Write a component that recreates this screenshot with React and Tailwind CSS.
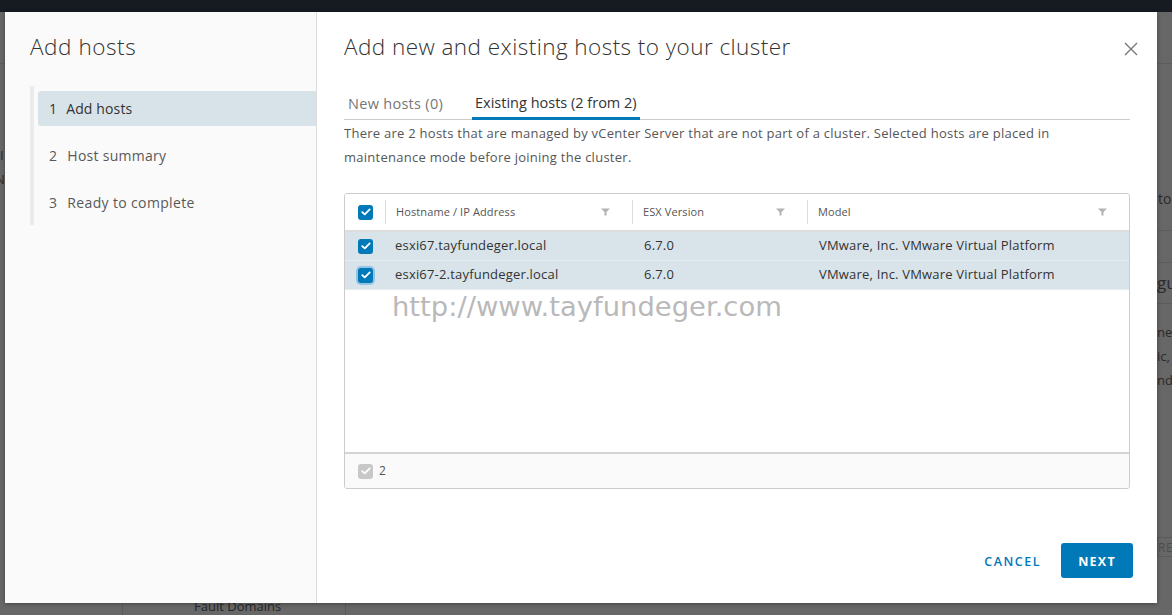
import React from "react";

const FONT = { fontFamily: '"Open Sans", "Liberation Sans", sans-serif' };

function Check({ variant = "blue", focus = false }) {
  const bg = variant === "blue" ? "bg-[#0079b8]" : "bg-[#c8c8c8]";
  return (
    <span
      className={`flex h-[15px] w-[15px] items-center justify-center rounded-[3px] ${bg} ${
        focus ? "shadow-[0_0_0_2px_rgba(90,170,230,0.55)]" : ""
      }`}
    >
      <svg width="10" height="8" viewBox="0 0 10 8" fill="none">
        <path d="M1.3 4.2 L3.8 6.4 L8.7 1.4" stroke="white" strokeWidth="1.8" strokeLinecap="round" strokeLinejoin="round" />
      </svg>
    </span>
  );
}

function Filter() {
  return (
    <svg width="9" height="8" viewBox="0 0 9 8">
      <path d="M0 0.5 H9 L5.5 4 V7.5 H3.5 V4 Z" fill="#b3b3b3" />
    </svg>
  );
}

function HeaderCell({ label, className }) {
  return (
    <div className={`flex items-center ${className}`}>
      <div className="my-[7px] flex h-[24px] flex-1 items-center justify-between border-l border-[#dcdcdc] pl-[10px] pr-[22px]">
        <span className="text-[11px] font-medium tracking-[0.01em] text-[#555]">{label}</span>
        <Filter />
      </div>
    </div>
  );
}

function Row({ host, focus }) {
  return (
    <div className="flex h-[29px] items-center border-b border-[#e6ecef] bg-[#d9e4ea] text-[13px] tracking-[0.015em] text-[#333]">
      <div className="flex w-[40px] items-center pl-[13px]">
        <Check focus={focus} />
      </div>
      <div className="w-[247px] pl-[10px]">{host}</div>
      <div className="w-[175px] pl-[12px]">6.7.0</div>
      <div className="flex-1 pl-[12px]">VMware, Inc. VMware Virtual Platform</div>
    </div>
  );
}

export default function App() {
  return (
    <div className="relative h-[615px] w-[1172px] overflow-hidden bg-[#676767]" style={FONT}>
      {/* background app chrome behind overlay */}
      <div className="absolute left-0 top-0 h-[12px] w-full bg-[#151b21]" />
      <div className="absolute left-0 top-[12px] h-[52px] w-full border-b border-[#5e5e5e]" />
      <span className="absolute left-[-5px] top-[170px] text-[13px] text-[#2a2a2a]">N</span>
      <span className="absolute left-[0px] top-[146px] text-[13px] text-[#2a2a2a]">I</span>
      <div className="absolute right-0 top-[230px] h-px w-[15px] bg-[#5c5c5c]" />
      <span className="absolute left-[1158px] top-[188px] text-[14px] text-[#2a2a2a]">to</span>
      <div className="absolute right-0 top-[262px] h-px w-[15px] bg-[#5c5c5c]" />
      <span className="absolute left-[1157px] top-[270px] text-[17px] text-[#2a2a2a]">gu</span>
      <div className="absolute right-0 top-[303px] h-px w-[15px] bg-[#5c5c5c]" />
      <span className="absolute left-[1157px] top-[323px] text-[13px] text-[#2a2a2a]">ne</span>
      <span className="absolute left-[1157px] top-[347px] text-[13px] text-[#2a2a2a]">ic,</span>
      <span className="absolute left-[1157px] top-[371px] text-[13px] text-[#2a2a2a]">nd</span>
      <div className="absolute left-[1157px] top-[537px] h-[20px] w-[20px] border border-[#5a5a5a]" />
      <span className="absolute left-[1158px] top-[539px] text-[12px] tracking-wider text-[#4e4e4e]">RE</span>
      <div className="absolute left-[122px] top-[603px] h-[12px] w-px bg-[#5a5a5a]" />
      <div className="absolute left-[345px] top-[603px] h-[12px] w-px bg-[#5a5a5a]" />
      <span className="absolute left-[194px] top-[597px] text-[13px] text-[#262626]">Fault Domains</span>

      {/* dialog */}
      <div className="absolute left-[5px] top-[12px] flex h-[591px] w-[1152px] bg-white shadow-[0_1px_4px_rgba(0,0,0,0.35)]">
        {/* left panel */}
        <div className="flex w-[312px] flex-col border-r border-[#dddddd] bg-[#fafafa]">
          <h2 className="pl-[25px] pt-[21px] text-[22.5px] font-light leading-[28px] tracking-[0.025em] text-[#333]">Add hosts</h2>
          <div className="ml-[25px] mt-[25px] flex flex-col gap-[12px] border-l-[4px] border-[#ebebeb] pb-[5px] pl-[4px] pt-[5px]">
            <div className="flex h-[35px] items-center gap-[9px] rounded-l-[3px] bg-[#d8e3e9] pl-[11px] text-[14px] tracking-[0.01em] text-[#333]">
              <span>1</span>
              <span>Add hosts</span>
            </div>
            <div className="flex h-[35px] items-center gap-[10px] pl-[11px] text-[14px] tracking-[0.02em] text-[#595959]">
              <span>2</span>
              <span>Host summary</span>
            </div>
            <div className="flex h-[35px] items-center gap-[10px] pl-[11px] text-[14px] tracking-[0.025em] text-[#595959]">
              <span>3</span>
              <span>Ready to complete</span>
            </div>
          </div>
        </div>

        {/* right panel */}
        <div className="flex flex-1 flex-col px-[27px]">
          <div className="flex items-center justify-between pt-[21px]">
            <h1 className="text-[22.5px] font-light leading-[28px] tracking-[0.02em] text-[#333]">
              Add new and existing hosts to your cluster
            </h1>
            <svg width="16" height="16" viewBox="0 0 16 16" className="-mr-[9px] mt-[3px]">
              <path d="M2 2 L14 14 M14 2 L2 14" stroke="#777" strokeWidth="1.4" />
            </svg>
          </div>

          <div className="mt-[29px] flex h-[30px] items-end gap-[25px] border-b border-[#cccccc]">
            <div className="flex h-[30px] items-center px-[4px] text-[14.5px] tracking-[0.02em] text-[#777]">New hosts (0)</div>
            <div className="-mb-px flex h-[31px] items-center border-b-[3px] border-[#0079b8] px-[3px] text-[14.5px] text-[#333]">
              Existing hosts (2 from 2)
            </div>
          </div>

          <p className="pt-[1px] text-[13px] leading-[24px] tracking-[0.02em] text-[#565656]">
            There are 2 hosts that are managed by vCenter Server that are not part of a cluster. Selected hosts are placed in
            <br />
            maintenance mode before joining the cluster.
          </p>

          {/* datagrid */}
          <div className="relative mt-[24px] flex h-[296px] flex-col overflow-hidden rounded-[3px] border border-[#cccccc]">
            <div className="flex h-[38px] border-b-2 border-[#dddddd] bg-white">
              <div className="flex w-[40px] items-center pl-[13px]">
                <Check />
              </div>
              <HeaderCell label="Hostname / IP Address" className="w-[247px]" />
              <HeaderCell label="ESX Version" className="w-[175px]" />
              <HeaderCell label="Model" className="flex-1" />
            </div>
            <Row host="esxi67.tayfundeger.local" />
            <Row host="esxi67-2.tayfundeger.local" focus />
            <div className="relative flex-1 bg-white">
              <span
                className="absolute left-[47px] top-[0px] text-[27.4px] leading-[34px] text-[#b9b9b9]"
                style={{ fontFamily: '"DejaVu Sans", Verdana, sans-serif' }}
              >
                http://www.tayfundeger.com
              </span>
            </div>
            <div className="flex h-[36px] items-center gap-[6px] border-t-2 border-[#d4d4d4] bg-[#fafafa] pl-[13px] text-[12px] text-[#565656]">
              <Check variant="gray" />
              <span>2</span>
            </div>
          </div>

          <div className="mt-auto -mr-[3px] flex items-center justify-end gap-[8px] pb-[25px]">
            <button className="h-[35px] px-[12px] pt-[3px] text-[12.5px] font-semibold tracking-[0.12em] text-[#0079b8]">CANCEL</button>
            <button className="h-[35px] w-[72px] rounded-[3px] bg-[#0079b8] pt-[3px] text-[12.5px] font-bold tracking-[0.1em] text-white">
              NEXT
            </button>
          </div>
        </div>
      </div>
    </div>
  );
}
